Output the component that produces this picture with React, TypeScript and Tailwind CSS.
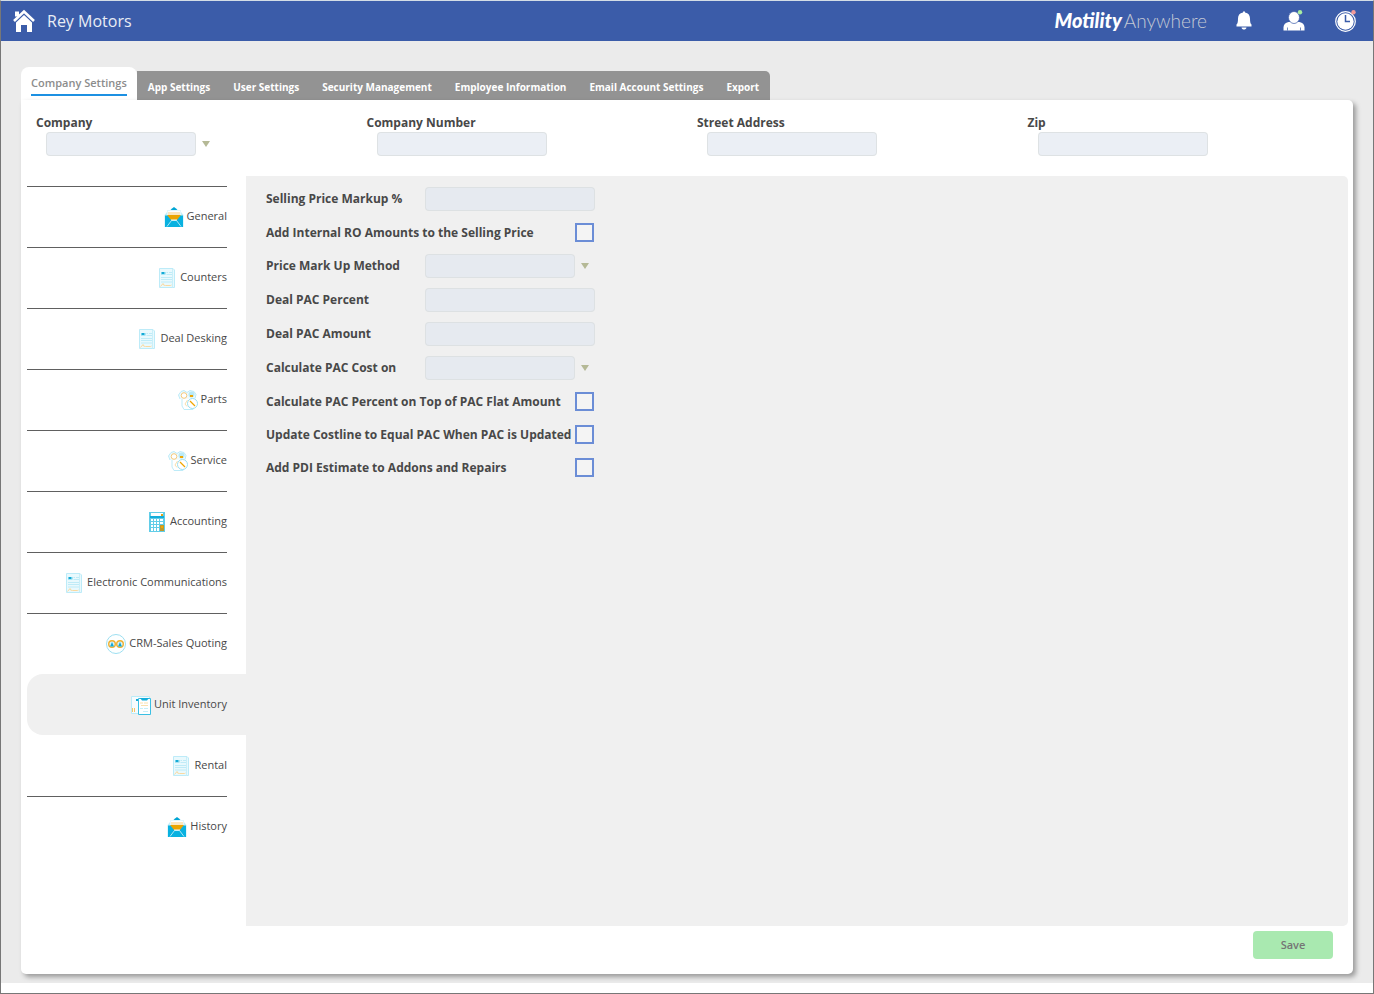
import { useState, type ReactNode } from "react";

type IconName = "envelope" | "document" | "gears" | "calculator" | "crm" | "clipboard";

const TABS = [
  "App Settings",
  "User Settings",
  "Security Management",
  "Employee Information",
  "Email Account Settings",
  "Export",
];

const SECTIONS: { label: string; icon: IconName }[] = [
  { label: "General", icon: "envelope" },
  { label: "Counters", icon: "document" },
  { label: "Deal Desking", icon: "document" },
  { label: "Parts", icon: "gears" },
  { label: "Service", icon: "gears" },
  { label: "Accounting", icon: "calculator" },
  { label: "Electronic Communications", icon: "document" },
  { label: "CRM-Sales Quoting", icon: "crm" },
  { label: "Unit Inventory", icon: "clipboard" },
  { label: "Rental", icon: "document" },
  { label: "History", icon: "envelope" },
];

type Field = { id: string; label: string; kind: "text" | "select" | "check" };

const COMPANY_FIELDS: Field[] = [
  { id: "company", label: "Company", kind: "select" },
  { id: "company-number", label: "Company Number", kind: "text" },
  { id: "street-address", label: "Street Address", kind: "text" },
  { id: "zip", label: "Zip", kind: "text" },
];

const INVENTORY_FIELDS: Field[] = [
  { id: "markup-percent", label: "Selling Price Markup %", kind: "text" },
  { id: "internal-ro", label: "Add Internal RO Amounts to the Selling Price", kind: "check" },
  { id: "markup-method", label: "Price Mark Up Method", kind: "select" },
  { id: "pac-percent", label: "Deal PAC Percent", kind: "text" },
  { id: "pac-amount", label: "Deal PAC Amount", kind: "text" },
  { id: "pac-cost", label: "Calculate PAC Cost on", kind: "select" },
  { id: "pac-flat", label: "Calculate PAC Percent on Top of PAC Flat Amount", kind: "check" },
  { id: "costline", label: "Update Costline to Equal PAC When PAC is Updated", kind: "check" },
  { id: "pdi", label: "Add PDI Estimate to Addons and Repairs", kind: "check" },
];

function SectionIcon({ name }: { name: IconName }) {
  let art: ReactNode;
  switch (name) {
    case "envelope":
      art = (
        <>
          <path d="M.5 8 3 5V3.500h14V5l2.500 3v12H.500z" fill="#c5eef8" />
          <path d="M6.500 3 8 1.500 10 0l2 1.500L13.500 3z" fill="#00a5d4" />
          <path d="M3.500 4h13v6h-13z" fill="#fff" />
          <path d="M4 5h12v3.500H4z" fill="#fbe6bf" />
          <path d="M3 8h14l-3 5H6z" fill="#eba400" />
          <path d="M1 8.500h2.500L7 13h6l3.500-4.500H19V20H1z" fill="#08b1e0" />
          <path d="M3 19.500 7.500 13.500h5l4.500 6" fill="none" stroke="#a6e4f5" />
          <path d="M7 13h6" stroke="#e5f8fd" />
        </>
      );
      break;
    case "document":
      art = (
        <>
          <path d="M2.500.5h13.500l1.500 1.500v17.500h-15z" fill="#e9f9fd" stroke="#bdebf8" />
          <path d="M15.500 1v18.500" stroke="#c9eff9" />
          <path d="M4 4h4.500v2.500H4z" fill="#6fd0eb" />
          <path d="M5 4h2v2H5z" fill="#14a9d5" />
          <path d="M9.500 4.500h1.500M12 4.500h3M9.500 6.500H15M4 9.500h11M4 11.500h11M4 14h11" stroke="#bfebf7" />
          <path d="M3.500 18.500 6 15.500l.5 1.500 2 .5h5l1-.5" fill="none" stroke="#fad9a0" />
        </>
      );
      break;
    case "gears":
      art = (
        <>
          <path d="M2 9 .5 5 3 1.500 6 .5l3 2 3-2 4 1 2 3-1 4" fill="#eefafd" stroke="#bdebf8" />
          <path d="M4 9v7l2 3.500h9v-3" fill="#fff" stroke="#bdebf8" />
          <circle cx="6" cy="5.500" r="2.800" fill="#fff" stroke="#f6c97a" />
          <circle cx="13.500" cy="4.500" r="3" fill="#b8e8f5" />
          <path d="M12 5h3v2h-3z" fill="#f0a500" />
          <path d="M9.500 10 7 14l2 2.500" fill="none" stroke="#fae0ad" />
          <circle cx="14.500" cy="13.500" r="5" fill="#fff" stroke="#9bdff1" />
          <path d="m12 11 5 5" stroke="#f0a500" strokeWidth="1.300" />
        </>
      );
      break;
    case "calculator":
      art = (
        <>
          <path d="M2 0h16v20H2z" fill="#62cde8" />
          <path d="M4 1h12v3H4z" fill="#fff" />
          <path d="M14 2h2v2h-2z" fill="#eba413" />
          <path d="M3 4h14v2H3z" fill="#13aedb" />
          <path d="M4 7h2v2H4zm3 0h2v2H7zm3 0h2v2h-2zm3 0h3v2h-3zM4 10h2v2H4zm3 0h2v2H7zm3 0h2v2h-2zm3 0h3v2h-3zM4 13h2v2H4zm3 0h2v2H7zm3 0h2v2h-2zM4 16h2v3H4zm3 0h2v3H7zm3 0h2v3h-2z" fill="#fff" />
          <path d="M13 13h4v6h-4z" fill="#bd9a2d" />
          <path d="M14 14h2v2h-2z" fill="#f5a600" />
        </>
      );
      break;
    case "crm":
      art = (
        <>
          <circle cx="10" cy="10" r="9.500" fill="#fdffff" stroke="#9ddff1" />
          <circle cx="6" cy="10" r="3.300" fill="#d6f3fa" stroke="#f0b030" strokeWidth="1.400" />
          <circle cx="14" cy="10" r="3.300" fill="#d6f3fa" stroke="#f0b030" strokeWidth="1.400" />
          <path d="M4 12.500 6 8l2 4.500zM12 12.500 14 8l2 4.500z" fill="#14a9d5" />
        </>
      );
      break;
    case "clipboard":
      art = (
        <>
          <path d="M.5 1.500h18v17H.500z" fill="#f6fbfd" stroke="#bcebf7" />
          <path d="M1 13h1v4H1zM3 13h1v4H3z" fill="#f7c566" />
          <path d="M5 4h3v2H5z" fill="#14a9d5" />
          <path d="M7.500 3.500h12v16h-12z" fill="#fff" stroke="#3bbfe3" />
          <path d="M9 3h9l-2 2.500h-5z" fill="#13aedb" />
          <path d="M9 8h3M13 8h4M10 10.500h7" stroke="#fae0ad" />
          <path d="M9 13.500h3M13 13.500h4M12 16.500h5" stroke="#c5eef8" />
        </>
      );
  }
  return (
    <svg viewBox="0 0 20 20" className="size-5 shrink-0" aria-hidden="true">
      {art}
    </svg>
  );
}

function HomeIcon() {
  return (
    <svg viewBox="0 0 22 24" className="h-6 w-[22px]" aria-hidden="true">
      <path d="M2 2.500h4v5H2z" fill="#fff" />
      <path d="M1 12 11 2.500 21 12" fill="none" stroke="#fff" strokeWidth="2.600" />
      <path d="m11 6 8 7.500V23h-5v-7H8v7H3v-9.500z" fill="#fff" />
    </svg>
  );
}

function BellIcon() {
  return (
    <svg viewBox="0 0 18 22" className="h-[22px] w-[18px]" aria-hidden="true">
      <path d="M8 1.500h2v1c3.500.6 5 3 5 6 0 3.500.4 5 1.500 6v2h-15v-2c1.100-1 1.500-2.500 1.500-6 0-3 1.500-5.400 5-6zM6.500 17.500h5c-.3 1.400-1.200 2-2.500 2s-2.200-.6-2.500-2z" fill="#fff" />
    </svg>
  );
}

function UserIcon() {
  return (
    <svg viewBox="0 0 22 22" className="size-[22px]" aria-hidden="true">
      <path d="M.5 20.500v-3c0-3 2-5 5-5.500h11c3 .5 5 2.500 5 5.500v3z" fill="#fff" />
      <path d="M4.500 17.500v3M17.500 17.500v3" stroke="#3b5ca9" strokeWidth=".7" />
      <ellipse cx="11" cy="7.500" rx="5.500" ry="6" fill="#fff" stroke="#3b5ca9" strokeWidth=".7" />
      <circle cx="17" cy="2.200" r="2.200" fill="#a8eda1" />
    </svg>
  );
}

function ClockIcon() {
  return (
    <svg viewBox="0 0 22 22" className="size-[22px]" aria-hidden="true">
      <circle cx="10.500" cy="11.500" r="9.800" fill="#3b5ca9" stroke="#fff" strokeWidth="1.200" />
      <circle cx="10.500" cy="11.500" r="8.200" fill="#fff" />
      <path d="M10.500 5v6.500H15" fill="none" stroke="#3b5ca9" strokeWidth="1.500" />
      <circle cx="18.500" cy="2.200" r="2.200" fill="#f19a9a" />
    </svg>
  );
}

function Control({ field }: { field: Field }) {
  if (field.kind === "check") {
    return (
      <input
        id={field.id}
        type="checkbox"
        className="mr-px size-[19px] shrink-0 appearance-none border-2 border-[#6b8dd6] bg-[#f4f4f4] checked:bg-[#6b8dd6]"
      />
    );
  }
  if (field.kind === "select") {
    return (
      <div className="flex w-[170px] shrink-0 items-center gap-[6px]">
        <select
          id={field.id}
          className="h-6 w-[150px] appearance-none rounded border border-[#d9dbdd]/70 bg-[#e1e7ef]/65 px-2 text-[11px]"
        >
          <option value="" />
        </select>
        <svg viewBox="0 0 8 6" className="h-[6px] w-2" aria-hidden="true">
          <path d="M0 0h8L4 6z" fill="#b5b996" />
        </svg>
      </div>
    );
  }
  return (
    <input
      id={field.id}
      type="text"
      className="h-6 w-[170px] shrink-0 rounded border border-[#d9dbdd]/70 bg-[#e1e7ef]/65 px-2 text-[11px]"
    />
  );
}

export default function App() {
  const [active, setActive] = useState("Unit Inventory");

  return (
    <div className="flex min-h-screen flex-col border border-t-[#d3dde6] border-r-[#777] border-b-[#777] border-l-[#777] bg-white pb-[10px] font-['Open_Sans','Noto_Sans',sans-serif] text-[#484848]">
      <header className="flex h-10 items-center justify-between bg-[#3b5ca9] pr-4 pb-px pl-3">
        <div className="flex items-center gap-3">
          <a href="#" aria-label="Home">
            <HomeIcon />
          </a>
          <h1 className="text-base text-[#e8edf5]">Rey Motors</h1>
        </div>
        <div className="flex items-center">
          <div className="mr-7 flex items-baseline gap-[2px] font-[Lato,sans-serif]">
            <span className="text-xl font-black text-white italic">Motility</span>
            <span className="text-[19px] font-light text-[#c3c9d4]">Anywhere</span>
          </div>
          <div className="flex items-center gap-[30px]">
            <button type="button" aria-label="Notifications">
              <BellIcon />
            </button>
            <button type="button" aria-label="Account">
              <UserIcon />
            </button>
            <button type="button" aria-label="Time clock">
              <ClockIcon />
            </button>
          </div>
        </div>
      </header>

      <main className="flex flex-1 flex-col bg-[#ebebeb] px-5 pt-[26px] pb-[9px]">
        <nav className="flex items-end">
          <a href="#" className="h-[33px] rounded-t-lg bg-white px-[10px] pt-2">
            <span className="block border-b-2 border-[#1c90e2] pb-[3px] text-[11px] leading-4 font-semibold text-[#8c8c8c]">
              Company Settings
            </span>
          </a>
          <div className="flex h-[29px] items-center gap-[23px] rounded-tr-[5px] bg-[#939393] px-[11px] pt-1 text-[10px] font-bold text-white">
            {TABS.map((tab) => (
              <a key={tab} href="#">
                {tab}
              </a>
            ))}
          </div>
        </nav>

        <form
          className="flex flex-1 flex-col rounded-b-[5px] rounded-tr-[5px] bg-white px-[5px] shadow-[3px_3px_5px_rgba(0,0,0,0.35)]"
          onSubmit={(e) => e.preventDefault()}
        >
          <div className="grid h-[76px] grid-cols-4 pt-[14px]">
            {COMPANY_FIELDS.map((field) => (
              <div key={field.id} className="pl-[10px]">
                <label htmlFor={field.id} className="block text-xs leading-[18px] font-bold">
                  {field.label}
                </label>
                <div className="flex pl-[10px]">
                  <Control field={field} />
                </div>
              </div>
            ))}
          </div>

          <div className="flex flex-1">
            <ul className="w-[220px] shrink-0 pt-[10px] pl-px">
              {SECTIONS.map(({ label, icon }, i) => {
                const isActive = label === active;
                const afterActive = i > 0 && SECTIONS[i - 1].label === active;
                return (
                  <li key={label} className={isActive ? "rounded-l-2xl bg-[#f0f0f0]" : ""}>
                    <button
                      type="button"
                      onClick={() => setActive(label)}
                      className={`flex h-[61px] w-[200px] items-center justify-end gap-[3px] border-t text-[11px] ${
                        isActive || afterActive ? "border-transparent" : "border-[#606060]"
                      }`}
                    >
                      <SectionIcon name={icon} />
                      <span className="pb-[2px]">{label}</span>
                    </button>
                  </li>
                );
              })}
            </ul>

            <section aria-label={active} className="flex-1 rounded-r-[5px] bg-[#f0f0f0] px-5 pt-[6px]">
              {INVENTORY_FIELDS.map((field) => (
                <div
                  key={field.id}
                  className={`flex w-[329px] items-center justify-between ${
                    field.kind === "check" ? "h-[33px]" : "h-[34px]"
                  }`}
                >
                  <label htmlFor={field.id} className="text-xs font-bold whitespace-nowrap">
                    {field.label}
                  </label>
                  <Control field={field} />
                </div>
              ))}
            </section>
          </div>

          <div className="flex h-12 items-start justify-end pt-[5px] pr-[15px]">
            <button
              type="submit"
              className="h-7 w-20 rounded bg-[#a9e9b0] text-[11px] font-semibold text-[#757575]"
            >
              Save
            </button>
          </div>
        </form>
      </main>
    </div>
  );
}
